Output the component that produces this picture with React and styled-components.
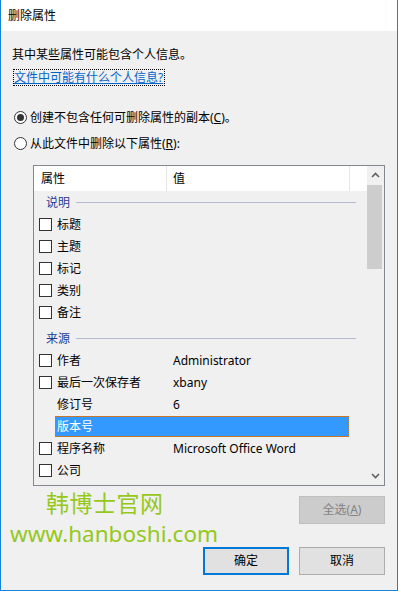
import styled, { createGlobalStyle } from "styled-components";

const GlobalStyle = createGlobalStyle`
  html, body {
    margin: 0;
    padding: 0;
    background: #f0f0f0;
  }
  * {
    box-sizing: border-box;
  }
`;

const FONT = `"Noto Sans", "Noto Sans CJK SC", sans-serif`;

const groups = [
  {
    title: "说明",
    rows: [
      { name: "标题", check: true },
      { name: "主题", check: true },
      { name: "标记", check: true },
      { name: "类别", check: true },
      { name: "备注", check: true },
    ],
  },
  {
    title: "来源",
    rows: [
      { name: "作者", value: "Administrator", check: true },
      { name: "最后一次保存者", value: "xbany", check: true },
      { name: "修订号", value: "6" },
      { name: "版本号", selected: true },
      { name: "程序名称", value: "Microsoft Office Word", check: true },
      { name: "公司", check: true },
    ],
  },
];

const Chevron = ({ down }) => (
  <svg width="9" height="6" viewBox="0 0 9 6">
    <path
      d={down ? "M1 1 L4.5 4.5 L8 1" : "M1 5 L4.5 1.5 L8 5"}
      fill="none"
      stroke="#606060"
      strokeWidth="1.6"
    />
  </svg>
);

const App = () => {
  return (
    <>
      <GlobalStyle />
      <Window>
        <TitleBar>删除属性</TitleBar>
        <Body>
          <Intro>其中某些属性可能包含个人信息。</Intro>
          <LinkRow>
            <Link>文件中可能有什么个人信息?</Link>
          </LinkRow>
          <RadioRow $top={23}>
            <Radio $checked />
            <span>
              创建不包含任何可删除属性的副本(<u>C</u>)。
            </span>
          </RadioRow>
          <RadioRow $top={10}>
            <Radio />
            <span>
              从此文件中删除以下属性(<u>R</u>):
            </span>
          </RadioRow>

          <ListBox>
            <ListContent>
              <HeaderRow>
                <HeaderCell $width={133}>属性</HeaderCell>
                <HeaderCell $width={183}>值</HeaderCell>
                <HeaderCell $width={17} $last />
              </HeaderRow>
              {groups.map((group, gi) => (
                <div key={group.title}>
                  <GroupHeader $first={gi === 0}>
                    <span>{group.title}</span>
                    <GroupLine />
                  </GroupHeader>
                  {group.rows.map((row) => (
                    <Row key={row.name}>
                      <CheckSlot>{row.check && <CheckBox />}</CheckSlot>
                      <RowCells $selected={row.selected}>
                        <NameCell>{row.name}</NameCell>
                        <span>{row.value}</span>
                      </RowCells>
                    </Row>
                  ))}
                </div>
              ))}
            </ListContent>
            <ScrollBar>
              <ArrowButton>
                <Chevron />
              </ArrowButton>
              <Track>
                <Thumb />
              </Track>
              <ArrowButton>
                <Chevron down />
              </ArrowButton>
            </ScrollBar>
          </ListBox>

          <Footer>
            <Watermark>
              <WatermarkTitle>韩博士官网</WatermarkTitle>
              <WatermarkUrl>www.hanboshi.com</WatermarkUrl>
            </Watermark>
            <ButtonRow>
              <Button disabled>
                全选(<u>A</u>)
              </Button>
            </ButtonRow>
            <ButtonRow $top={23}>
              <Button $default>确定</Button>
              <Button>取消</Button>
            </ButtonRow>
          </Footer>
        </Body>
      </Window>
    </>
  );
};

export default App;

const Window = styled.div`
  width: 398px;
  height: 591px;
  display: flex;
  flex-direction: column;
  border: 1px solid #1883d7;
  border-top: none;
  font-family: ${FONT};
  font-size: 12px;
  color: #000;
  background: #f0f0f0;
`;

const TitleBar = styled.div`
  height: 31px;
  flex: none;
  display: flex;
  align-items: center;
  padding-left: 7px;
  padding-bottom: 1px;
  background: #ffffff;
  font-size: 12px;
`;

const Body = styled.div`
  flex: 1;
  padding: 0 12px 0 11px;
  display: flex;
  flex-direction: column;
`;

const Intro = styled.div`
  margin-top: 16px;
  line-height: 16px;
`;

const LinkRow = styled.div`
  margin-top: 6px;
  height: 17px;
`;

const Link = styled.span`
  display: inline-block;
  margin-left: 1px;
  padding: 0 1px 0 0;
  line-height: 15px;
  border: 1px dotted #000;
  color: #0066cc;
  text-decoration: underline;
`;

const RadioRow = styled.div`
  margin-top: ${(p) => p.$top}px;
  display: flex;
  align-items: center;
  gap: 3px;
  height: 16px;
  padding-left: 2px;
`;

const Radio = styled.span`
  width: 13px;
  height: 13px;
  flex: none;
  border-radius: 50%;
  border: 1px solid #333;
  background: #fff;
  display: flex;
  align-items: center;
  justify-content: center;

  &::after {
    content: "";
    width: 7px;
    height: 7px;
    border-radius: 50%;
    background: ${(p) => (p.$checked ? "#333" : "transparent")};
  }
`;

const ListBox = styled.div`
  margin-top: 14px;
  margin-left: 21px;
  width: 352px;
  height: 321px;
  border: 1px solid #828790;
  display: flex;
  background: #f0f0f0;
`;

const ListContent = styled.div`
  flex: 1;
  overflow: hidden;
`;

const HeaderRow = styled.div`
  display: flex;
  height: 25px;
  background: #ffffff;
`;

const HeaderCell = styled.div`
  width: ${(p) => p.$width}px;
  flex: none;
  display: flex;
  align-items: center;
  padding-left: ${(p) => (p.$width > 150 ? 6 : 7)}px;
  border-right: ${(p) => (p.$last ? "none" : "1px solid #e5e5e5")};
  padding-bottom: 1px;
`;

const GroupHeader = styled.div`
  display: flex;
  align-items: center;
  height: 22px;
  margin-top: ${(p) => (p.$first ? 0 : 4)}px;
  padding: 0 11px 0 12px;
  gap: 6px;
  color: #1e3c96;
`;

const GroupLine = styled.div`
  flex: 1;
  height: 1px;
  background: #b3bbd0;
`;

const Row = styled.div`
  display: flex;
  align-items: center;
  height: 22px;
`;

const CheckSlot = styled.div`
  width: 21px;
  flex: none;
  padding-left: 5px;
  display: flex;
  align-items: center;
`;

const CheckBox = styled.span`
  width: 13px;
  height: 13px;
  border: 1px solid #333;
  background: #fff;
`;

const RowCells = styled.div`
  width: 294px;
  height: 21px;
  display: flex;
  align-items: center;
  padding-left: 2px;
  background: ${(p) => (p.$selected ? "#3399ff" : "transparent")};
  color: ${(p) => (p.$selected ? "#fff" : "#000")};
  outline: ${(p) => (p.$selected ? "1px dotted #c8782a" : "none")};
  outline-offset: -1px;
`;

const NameCell = styled.span`
  width: 116px;
  flex: none;
`;

const ScrollBar = styled.div`
  width: 17px;
  flex: none;
  display: flex;
  flex-direction: column;
  background: #f0f0f0;
`;

const ArrowButton = styled.div`
  height: 18px;
  display: flex;
  align-items: center;
  justify-content: center;
`;

const Track = styled.div`
  flex: 1;
  padding-top: 1px;
`;

const Thumb = styled.div`
  width: 15px;
  height: 84px;
  background: #cdcdcd;
`;

const Footer = styled.div`
  position: relative;
  margin-top: 10px;
  display: flex;
  flex-direction: column;
`;

const Watermark = styled.div`
  position: absolute;
  left: -2px;
  top: -8px;
  color: #95c81b;
  font-family: ${FONT};
  pointer-events: none;
`;

const WatermarkTitle = styled.div`
  margin-left: 36px;
  font-size: 23px;
  line-height: 30px;
  letter-spacing: 0.5px;
`;

const WatermarkUrl = styled.div`
  font-size: 22.5px;
  line-height: 32px;
`;

const ButtonRow = styled.div`
  margin-top: ${(p) => p.$top || 0}px;
  display: flex;
  justify-content: flex-end;
  gap: 10px;
`;

const Button = styled.button`
  width: 86px;
  height: 28px;
  font-family: ${FONT};
  font-size: 12px;
  line-height: 16px;
  padding: 0;
  background: ${(p) => (p.disabled ? "#cccccc" : "#e1e1e1")};
  color: ${(p) => (p.disabled ? "#838383" : "#000")};
  border: ${(p) =>
    p.$default
      ? "2px solid #0078d7"
      : p.disabled
      ? "1px solid #bfbfbf"
      : "1px solid #adadad"};
`;
